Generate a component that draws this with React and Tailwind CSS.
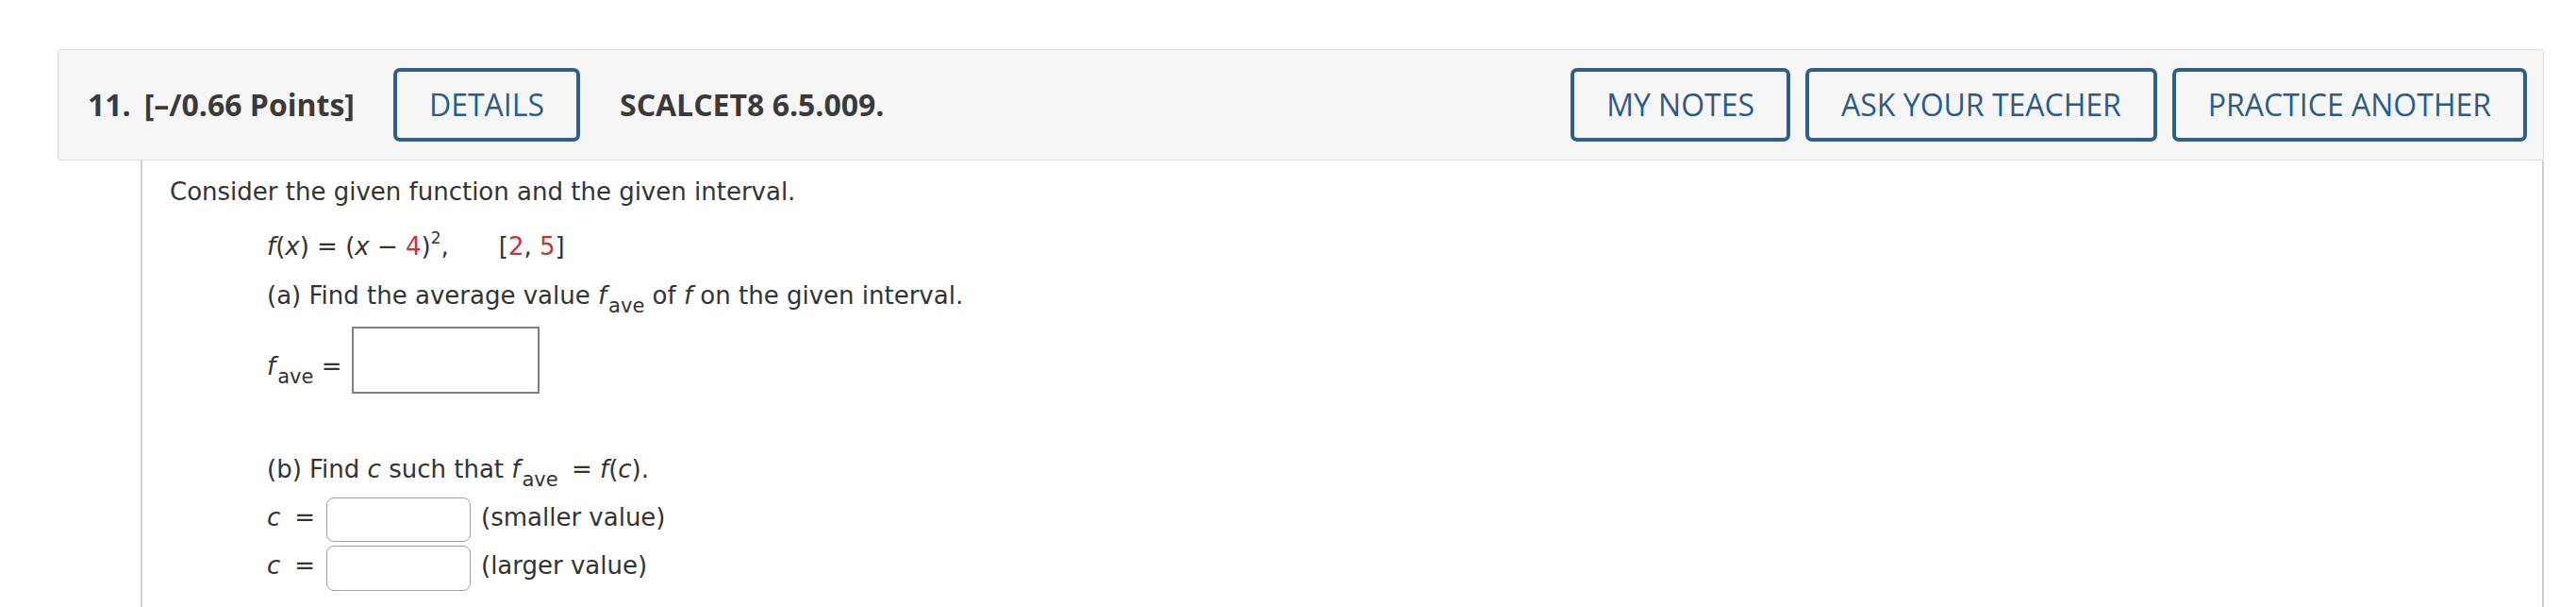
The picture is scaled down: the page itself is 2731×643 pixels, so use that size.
import React from "react";

function Btn({ children, className = "" }) {
  return (
    <div
      className={
        "flex h-[78px] items-center rounded-[7px] border-[4px] border-[#2e5f8c] px-[34px] text-[32px] leading-none text-[#2b5c89] " +
        className
      }
    >
      {children}
    </div>
  );
}

const Sub = ({ children }) => (
  <span className="relative top-[9px] ml-[2px] text-[21px] leading-none">{children}</span>
);

export default function App() {
  return (
    <div className="min-h-[643px] bg-white pt-[52px] pl-[61px] pr-[34px] text-[#333]">
      <div className="flex h-[118px] items-center rounded-[3px] border border-[#dcdcdc] bg-[#f6f6f6] pl-[31px] pr-[17px] font-['Open_Sans',sans-serif]">
        <span className="text-[32px] font-bold leading-none text-[#3a3a3a]">11.</span>
        <span className="ml-[14px] text-[32px] font-bold leading-none text-[#3a3a3a]">
          [–/0.66 Points]
        </span>
        <Btn className="ml-[41px]">DETAILS</Btn>
        <span className="ml-[42px] text-[32px] font-bold leading-none text-[#3a3a3a]">
          SCALCET8 6.5.009.
        </span>
        <div className="ml-auto flex gap-4">
          <Btn>MY NOTES</Btn>
          <Btn>ASK YOUR TEACHER</Btn>
          <Btn>PRACTICE ANOTHER</Btn>
        </div>
      </div>

      <div className="ml-[88px] min-h-[473px] border-x-2 border-[#d0d0d0] pl-[29px] pt-[18px] font-['DejaVu_Sans',Verdana,sans-serif] text-[26px] leading-[30px] text-[#333]">
        <div>Consider the given function and the given interval.</div>

        <div className="ml-[103px] mt-[28px]">
          <i>f</i>(<i>x</i>) = (<i>x</i> − <span className="text-[#cc3333]">4</span>)
          <span className="relative -top-[12px] text-[17px] leading-none">2</span>,
          <span className="ml-[53px]">
            [<span className="text-[#cc3333]">2</span>, <span className="text-[#cc3333]">5</span>]
          </span>
        </div>

        <div className="ml-[103px] mt-[22px]">
          (a) Find the average value <i>f</i>
          <Sub>ave</Sub> of <i>f</i> on the given interval.
        </div>

        <div className="ml-[103px] mt-[18px] flex items-start">
          <div className="pt-[27px]">
            <i>f</i>
            <Sub>ave</Sub> =
          </div>
          <div className="ml-[11px] h-[71px] w-[199px] border-2 border-[#808080] bg-white" />
        </div>

        <div className="ml-[103px] mt-[65px]">
          (b) Find <i>c</i> such that <i>f</i>
          <Sub>ave</Sub>{" "}
          <span className="ml-[6px]">=</span> <i>f</i>(<i>c</i>).
        </div>

        <div className="ml-[103px] mt-[15px] flex items-start">
          <div className="w-[63px] pt-[6px]">
            <i>c</i>
            <span className="ml-[15px]">=</span>
          </div>
          <div className="h-[47px] w-[153px] rounded-[8px] border-[1.5px] border-[#a0a0a0] bg-white" />
          <div className="ml-[11px] pt-[6px]">(smaller value)</div>
        </div>
        <div className="ml-[103px] mt-[4px] flex items-start">
          <div className="w-[63px] pt-[6px]">
            <i>c</i>
            <span className="ml-[15px]">=</span>
          </div>
          <div className="h-[48px] w-[153px] rounded-[8px] border-[1.5px] border-[#a0a0a0] bg-white" />
          <div className="ml-[11px] pt-[6px]">(larger value)</div>
        </div>
      </div>
    </div>
  );
}
